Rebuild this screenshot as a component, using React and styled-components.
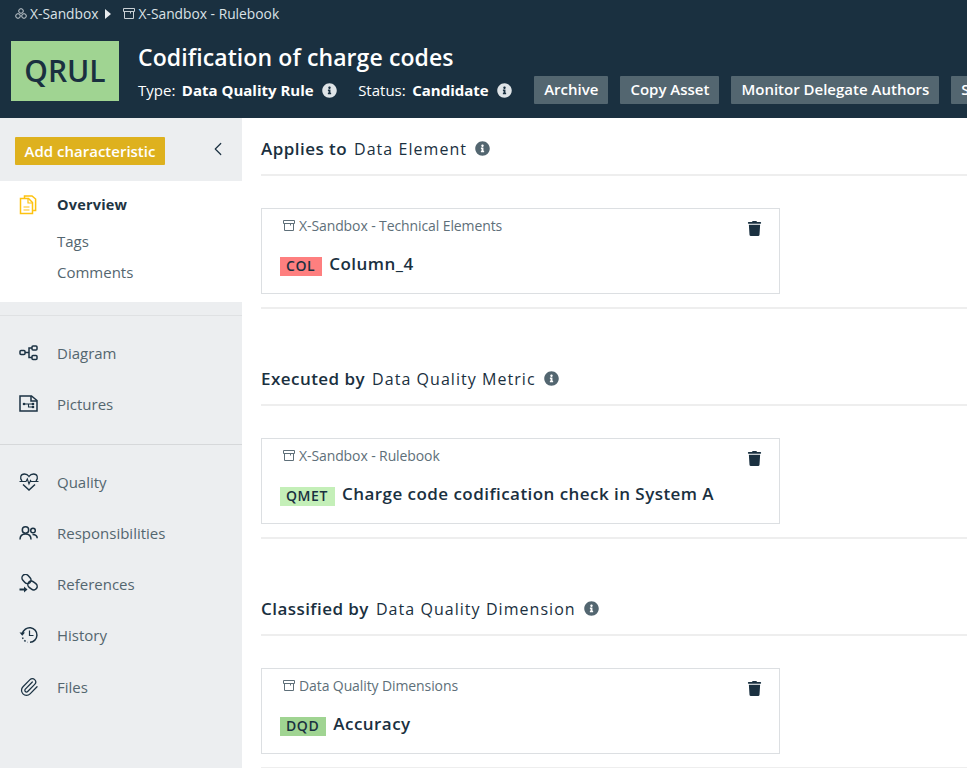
import React from "react";
import styled, { createGlobalStyle } from "styled-components";
import { FaInfoCircle, FaTrash } from "react-icons/fa";
import { ChevronLeft, Paperclip } from "lucide-react";

const GlobalStyle = createGlobalStyle`
  html, body {
    margin: 0;
    padding: 0;
    height: 100%;
    overflow: hidden;
    background: #fff;
    font-family: "Open Sans", "Liberation Sans", sans-serif;
  }
  * { box-sizing: border-box; }
`;

const DocIcon = () => (
  <svg width="18" height="20" viewBox="0 0 18 20" fill="none" stroke="#fdc210" strokeWidth="1.500">
    <path d="M5.500 3V1h7.500l3.600 3v11.500h-2.500" />
    <path d="M1.500 3.500h8l4 4v11h-12z" fill="#fff" />
    <path d="M9 3.500v4.500h4.500M4.500 12h6M4.500 15h6" strokeWidth="1.200" />
  </svg>
);

const DiagramIcon = () => (
  <svg width="19" height="16" viewBox="0 0 19 16" fill="none" stroke="#1b3243" strokeWidth="1.500">
    <rect x="1" y="5.500" width="5" height="4" rx="1" />
    <rect x="13" y="1" width="5" height="4" rx="1" />
    <rect x="13" y="10.500" width="5" height="4" rx="1" />
    <path d="M6 7.500h4M13 3h-3v9.500h3" />
  </svg>
);

const PictureIcon = () => (
  <svg width="19" height="17" viewBox="0 0 19 17" fill="none" stroke="#1b3243" strokeWidth="1.500">
    <path d="M1 1h11.500l5.500 4.500V16H1z" />
    <path d="M12 1v5h6" />
    <path d="M5 9h9M9.500 9v3h4.500" strokeWidth="1.100" />
    <circle cx="5" cy="9" r="1.300" fill="#1b3243" stroke="none" />
    <circle cx="14" cy="9" r="1.300" fill="#1b3243" stroke="none" />
    <circle cx="14" cy="12" r="1.300" fill="#1b3243" stroke="none" />
  </svg>
);

const HeartIcon = () => (
  <svg width="20" height="18" viewBox="0 0 20 18" fill="none" stroke="#1b3243" strokeWidth="1.300">
    <path d="M3 8C.5 5 1.500 1 5.500 1 7.500 1 9 2 10 3.500 11 2 12.500 1 14.500 1c4 0 5 4 2.500 7" />
    <path d="M4 11.500l6 5.500 6-5.500" strokeWidth="1.500" />
    <path d="M.5 8.500H7l1.300-2.500 1.700 5 1.500-3.500.7 1H19.500" strokeWidth="1.100" />
  </svg>
);

const PeopleIcon = () => (
  <svg width="19" height="14" viewBox="0 0 19 14" fill="none" stroke="#1b3243" strokeWidth="1.500">
    <circle cx="6.500" cy="4" r="3.200" />
    <path d="M1 13.500c0-3.500 2-5.500 5.500-5.500s5.500 2 5.500 5.500" />
    <circle cx="14" cy="4.500" r="2.300" />
    <path d="M13.500 8.500c3 0 4.700 1 4.700 3.800" />
  </svg>
);

const LinkIcon = () => (
  <svg width="20" height="19" viewBox="0 0 20 19" fill="none" stroke="#1b3243" strokeWidth="1.500">
    <rect x="2.500" y="1.500" width="10" height="7" rx="3.500" transform="rotate(48 7.500 5)" />
    <rect x="8.500" y="8" width="10" height="7" rx="3.500" transform="rotate(38 13.500 11.500)" />
    <path d="M.5 15.500h5" strokeWidth="2" />
    <path d="M5 12.500l3.500 3-3.500 3z" fill="#1b3243" stroke="none" />
  </svg>
);

const HistoryIcon = () => (
  <svg width="19" height="18" viewBox="0 0 19 18" fill="none" stroke="#1b3243" strokeWidth="1.500">
    <path d="M3.500 7.500A7.300 7.300 0 1 1 11 16.300" />
    <path d="M3.500 11.500a7.300 7.300 0 0 0 5 4.700" strokeDasharray="1.600 1.800" />
    <path d="M10.500 4.500v5h4" strokeWidth="1.200" />
    <path d="M.5 6.500h5.500l-2.700 3.200z" fill="#1b3243" stroke="none" />
  </svg>
);

const BoxIcon = ({ color }) => (
  <svg width="12" height="11" viewBox="0 0 12 11" fill="none" stroke={color} strokeWidth="1">
    <path d="M1.500 3.500v7h9v-7" />
    <path d="M.5.500h11v3h-11z" />
    <path d="M7.500 3.500v2" />
  </svg>
);

const SandboxIcon = () => (
  <svg width="12" height="11" viewBox="0 0 12 11" fill="none" stroke="#c9d0d5" strokeWidth="1">
    <circle cx="6" cy="3" r="2.300" />
    <circle cx="3" cy="8" r="2.300" />
    <circle cx="9" cy="8" r="2.300" />
  </svg>
);

const Page = styled.div`
  width: 967px;
  height: 768px;
  overflow: hidden;
  display: flex;
  flex-direction: column;
`;

const Header = styled.header`
  flex: 0 0 118px;
  background: #1a3040;
  color: #fff;
  overflow: hidden;
`;

const Crumbs = styled.div`
  height: 27px;
  padding-left: 15px;
  display: flex;
  align-items: center;
  font-size: 13.800px;
  color: #dbe2e6;
`;

const CrumbLabel = styled.span`
  margin-left: ${(p) => p.$gap}px;
`;

const CrumbArrow = styled.span`
  width: 0;
  height: 0;
  margin: 0 12px 0 6px;
  border-left: 6px solid #e8ecef;
  border-top: 5px solid transparent;
  border-bottom: 5px solid transparent;
`;

const HeaderBody = styled.div`
  display: flex;
  padding: 14px 0 0 11px;
`;

const Logo = styled.div`
  flex: 0 0 108px;
  height: 60px;
  padding-bottom: 2px;
  background: #a0d492;
  color: #1a3040;
  font-size: 30px;
  font-weight: 600;
  display: flex;
  align-items: center;
  justify-content: center;
`;

const HeaderText = styled.div`
  margin-left: 19px;
  min-width: 0;
`;

const Title = styled.h1`
  margin: 0;
  height: 33px;
  line-height: 32px;
  font-size: 23px;
  font-weight: 600;
  letter-spacing: 0.1px;
  white-space: nowrap;
`;

const Meta = styled.div`
  display: flex;
  align-items: center;
  height: 28px;
  margin-top: 2px;
  font-size: 15px;
  white-space: nowrap;
`;

const MetaValue = styled.b`
  margin-left: 6.500px;
  font-weight: 700;
`;

const MetaInfo = styled(FaInfoCircle)`
  flex: none;
  margin: 0 ${(p) => p.$after}px 0 8px;
  font-size: 15px;
  color: #dfe4e7;
`;

const ActionButton = styled.button`
  flex: none;
  height: 28px;
  margin-right: 12px;
  padding: 0 10px 2px;
  border: 0;
  border-radius: 1px;
  background: #536670;
  color: #fff;
  font: 600 15px "Open Sans", sans-serif;
`;

const Body = styled.div`
  flex: 1;
  display: flex;
  min-height: 0;
`;

const Sidebar = styled.aside`
  flex: 0 0 242px;
  background: #eceef0;
`;

const SideTop = styled.div`
  height: 63px;
  padding: 19px 13px 0 15px;
  display: flex;
  justify-content: space-between;
`;

const AddButton = styled.button`
  width: 150px;
  height: 28px;
  padding: 0;
  border: 0;
  border-radius: 1px;
  background: #deb11e;
  color: #fff;
  font: 600 15px "Open Sans", sans-serif;
`;

const Collapse = styled(ChevronLeft)`
  margin-top: 1px;
  color: #1a3040;
`;

const ActivePanel = styled.div`
  height: 121px;
  margin-bottom: 13px;
  padding-top: 11px;
  background: #fff;
`;

const NavItem = styled.div`
  display: flex;
  align-items: center;
  height: ${(p) => p.$h || 51}px;
  color: #54666f;
  font-size: 15px;
`;

const ActiveItem = styled(NavItem)`
  color: #1f3543;
  font-weight: 700;
  letter-spacing: 0.2px;
  font-size: 14.500px;
`;

const NavIcon = styled.span`
  flex: 0 0 57px;
  padding-left: 19px;
  display: flex;
  align-items: center;
`;

const ClipIcon = styled(Paperclip)`
  color: #1b3243;
`;

const SubList = styled.div`
  margin-top: 9px;
`;

const SubItem = styled.div`
  height: 31px;
  line-height: 31px;
  padding-left: 57px;
  color: #54666f;
  font-size: 15px;
`;

const NavGroup = styled.nav`
  padding: 11px 0 15px;
  border-top: 1px solid ${(p) => p.$line};
`;

const Main = styled.main`
  flex: 1;
  min-width: 0;
  padding: 5px 0 0 19px;
`;

const Section = styled.section`
  height: 230px;
`;

const SectionHead = styled.div`
  display: flex;
  align-items: center;
  height: 53px;
  border-bottom: 2px solid #eeeeee;
  color: #1a3040;
  white-space: nowrap;
`;

const HeadLabel = styled.b`
  font-size: 17px;
  font-weight: 600;
  letter-spacing: 0.450px;
`;

const HeadType = styled.span`
  margin-left: 7px;
  font-size: 16px;
  letter-spacing: 1.050px;
`;

const HeadInfo = styled(FaInfoCircle)`
  flex: none;
  margin-left: 8px;
  font-size: 15px;
  color: #536670;
`;

const CardRow = styled.div`
  padding: 32px 0 13px;
  border-bottom: 2px solid #eeeeee;
`;

const Card = styled.div`
  position: relative;
  width: 519px;
  height: 86px;
  padding: 5px 18px 0;
  border: 1px solid #dcdfe2;
`;

const CardPath = styled.div`
  display: flex;
  align-items: center;
  height: 22px;
  padding-left: 3px;
  color: #5e6f79;
  font-size: 14px;
  letter-spacing: -0.1px;
`;

const CardPathLabel = styled.span`
  margin-left: 4px;
`;

const CardTitle = styled.div`
  display: flex;
  align-items: flex-start;
  margin-top: 17px;
  color: #1a3040;
`;

const Tag = styled.span`
  height: 19px;
  margin-top: 4px;
  padding: 0 7px 0 6px;
  line-height: 18px;
  background: ${(p) => p.$bg};
  font-size: 14px;
  font-weight: 600;
  letter-spacing: 0.600px;
`;

const Name = styled.span`
  margin-left: 7px;
  line-height: 22px;
  font-size: 17px;
  font-weight: 600;
  letter-spacing: 0.450px;
`;

const Trash = styled(FaTrash)`
  position: absolute;
  top: 12px;
  right: 17px;
  font-size: 15px;
  color: #1a3040;
`;

const sections = [
  { label: "Applies to", type: "Data Element", path: "X-Sandbox - Technical Elements", tag: "COL", bg: "#fe7f7f", name: "Column_4" },
  { label: "Executed by", type: "Data Quality Metric", path: "X-Sandbox - Rulebook", tag: "QMET", bg: "#c4efb8", name: "Charge code codification check in System A" },
  { label: "Classified by", type: "Data Quality Dimension", path: "Data Quality Dimensions", tag: "DQD", bg: "#a0d492", name: "Accuracy" },
];

export default function App() {
  return (
    <Page>
      <GlobalStyle />
      <Header>
        <Crumbs>
          <SandboxIcon />
          <CrumbLabel $gap={3}>X-Sandbox</CrumbLabel>
          <CrumbArrow />
          <BoxIcon color="#c9d0d5" />
          <CrumbLabel $gap={4}>X-Sandbox - Rulebook</CrumbLabel>
        </Crumbs>
        <HeaderBody>
          <Logo>QRUL</Logo>
          <HeaderText>
            <Title>Codification of charge codes</Title>
            <Meta>
              Type:<MetaValue>Data Quality Rule</MetaValue>
              <MetaInfo $after={21.5} />
              Status:<MetaValue>Candidate</MetaValue>
              <MetaInfo $after={22.5} />
              <ActionButton>Archive</ActionButton>
              <ActionButton>Copy Asset</ActionButton>
              <ActionButton>Monitor Delegate Authors</ActionButton>
              <ActionButton>Subscribe</ActionButton>
            </Meta>
          </HeaderText>
        </HeaderBody>
      </Header>
      <Body>
        <Sidebar>
          <SideTop>
            <AddButton>Add characteristic</AddButton>
            <Collapse size={22} strokeWidth={1.300} />
          </SideTop>
          <ActivePanel>
            <ActiveItem $h={25}>
              <NavIcon><DocIcon /></NavIcon>
              Overview
            </ActiveItem>
            <SubList>
              <SubItem>Tags</SubItem>
              <SubItem>Comments</SubItem>
            </SubList>
          </ActivePanel>
          <NavGroup $line="#dfe1e3">
            <NavItem><NavIcon><DiagramIcon /></NavIcon>Diagram</NavItem>
            <NavItem><NavIcon><PictureIcon /></NavIcon>Pictures</NavItem>
          </NavGroup>
          <NavGroup $line="#d6d8da">
            <NavItem><NavIcon><HeartIcon /></NavIcon>Quality</NavItem>
            <NavItem><NavIcon><PeopleIcon /></NavIcon>Responsibilities</NavItem>
            <NavItem><NavIcon><LinkIcon /></NavIcon>References</NavItem>
            <NavItem><NavIcon><HistoryIcon /></NavIcon>History</NavItem>
            <NavItem $h={54}><NavIcon><ClipIcon size={20} strokeWidth={1.500} /></NavIcon>Files</NavItem>
          </NavGroup>
        </Sidebar>
        <Main>
          {sections.map((s) => (
            <Section key={s.label}>
              <SectionHead>
                <HeadLabel>{s.label}</HeadLabel>
                <HeadType>{s.type}</HeadType>
                <HeadInfo />
              </SectionHead>
              <CardRow>
                <Card>
                  <CardPath>
                    <BoxIcon color="#5e6f79" />
                    <CardPathLabel>{s.path}</CardPathLabel>
                  </CardPath>
                  <CardTitle>
                    <Tag $bg={s.bg}>{s.tag}</Tag>
                    <Name>{s.name}</Name>
                  </CardTitle>
                  <Trash />
                </Card>
              </CardRow>
            </Section>
          ))}
        </Main>
      </Body>
    </Page>
  );
}
